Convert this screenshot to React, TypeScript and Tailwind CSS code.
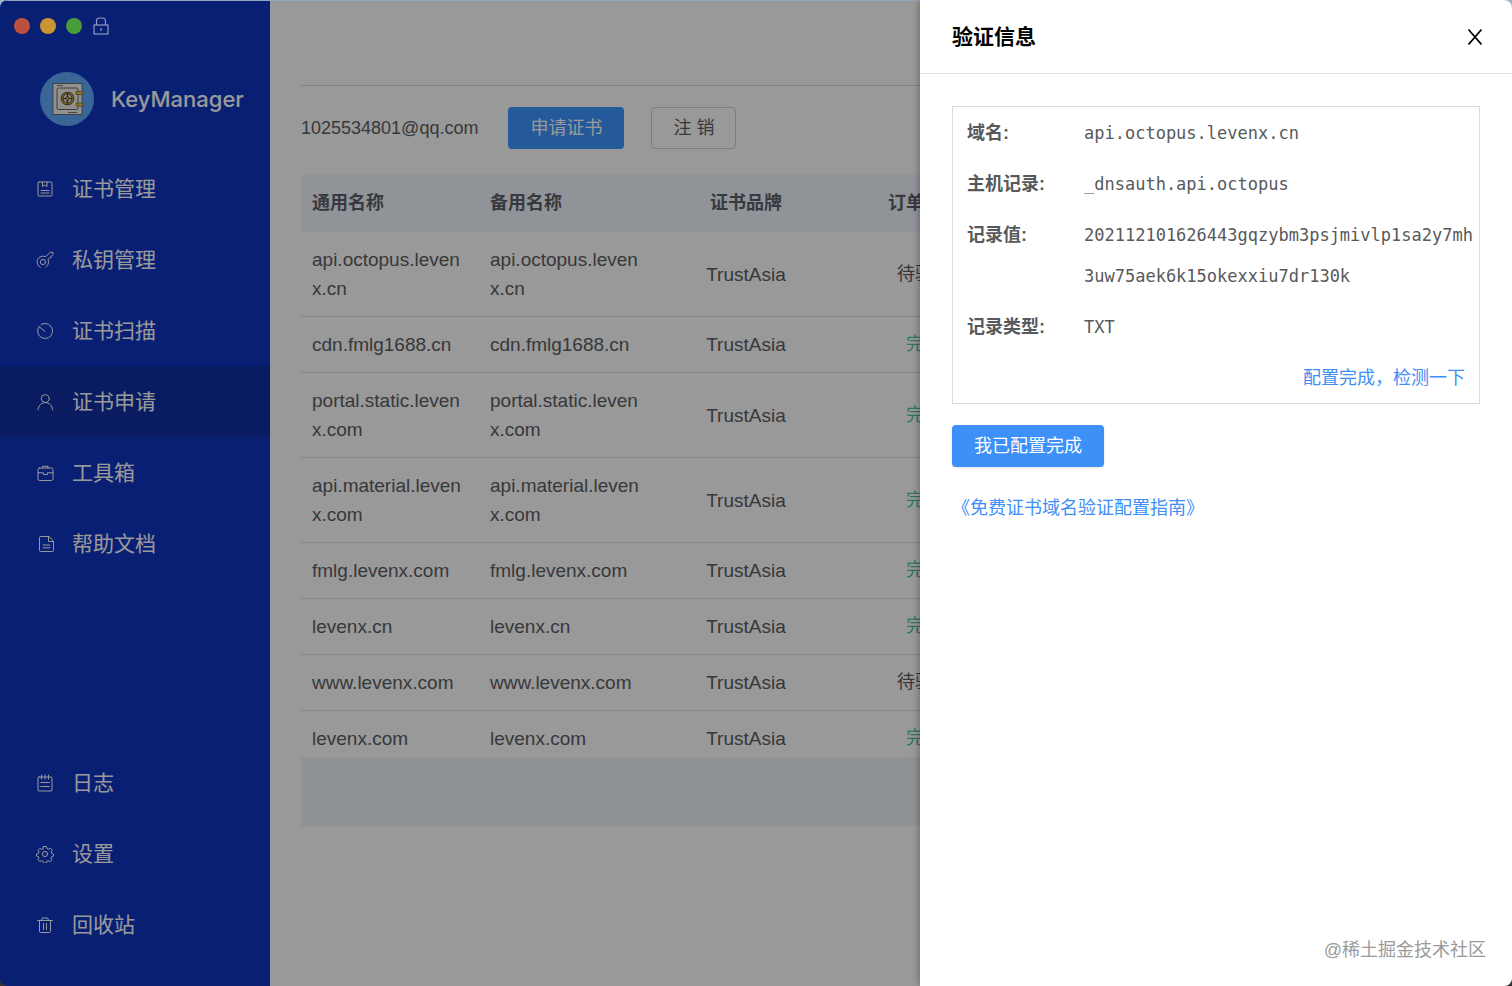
import React from "react";

const font = "font-['Liberation_Sans','Noto_Sans_CJK_SC',sans-serif]";

const icons: Record<string, React.ReactNode> = {
  book: (
    <>
      <rect x="2" y="2" width="14" height="14" rx="1" />
      <path d="M6.5 2v4.5l2.3-1.6 2.2 1.6V2M5 10.5h8M5 13h8" />
    </>
  ),
  key: (
    <>
      <circle cx="7" cy="11" r="2.6" />
      <path d="M4.2 16.2A5.8 5.8 0 0 1 9.6 5.8L14 1.3h3v2.2l-1.6 1.4-.3 1.6-1.8.4-1.2 1.6.5 2.3A5.8 5.8 0 0 1 9.8 16" />
    </>
  ),
  timer: <path d="M3 4.6A7.5 7.5 0 1 0 9 1.5c-1.4 0-2.6.4-3.7 1M3.4 4.9 9 9.4" />,
  user: (
    <>
      <circle cx="9.3" cy="5.6" r="4" />
      <path d="M2 16.8c.4-4.4 3.2-7.2 7.3-7.2s6.9 2.8 7.2 7.2" />
    </>
  ),
  briefcase: (
    <>
      <rect x="2" y="4" width="15" height="12.5" rx="1.5" />
      <path d="M6.5 4V2.3H12V4M2 8.800h5.500v1.700h4V8.800H17" />
    </>
  ),
  doc: (
    <>
      <path d="M12.500 1.500h-8a1 1 0 0 0-1 1v13a1 1 0 0 0 1 1h12a1 1 0 0 0 1-1v-9zM12.500 1.500v5h5" />
      <path d="M7 10h7M7 12.800h7" />
    </>
  ),
  log: (
    <>
      <rect x="2" y="3" width="14" height="14" rx="1" />
      <path d="M5.500 1v4M9 1v4M12.500 1v4M4.800 8.500h8.400M4.800 12.500h8.400" />
    </>
  ),
  gear: (
    <>
      <circle cx="9" cy="9" r="2.600" />
      <path d="M7.500 1.500h3l.5 2 1.500.7 1.900-1 1.900 2-1 1.800.4 1.300 1.800.8v2l-1.900.6-.6 1.400.9 1.800-1.800 1.700-1.800-.8-1.300.5-.6 1.700H7.500l-.6-1.800-1.300-.5-1.800.9-1.700-1.800.8-1.800-.5-1.300-1.900-.6v-2l1.900-.7.6-1.300-.9-1.800 1.800-1.900 1.800 1 1.300-.6z" />
    </>
  ),
  trash: (
    <path d="M1.500 4.500h15M5.500 4.500l.8-2.500h5.400l.8 2.500M3.500 4.500v11a1 1 0 0 0 1 1h9a1 1 0 0 0 1-1v-11M7.500 7.500v6M10.500 7.500v6" />
  ),
};

const topNav = [
  { icon: "book", label: "证书管理" },
  { icon: "key", label: "私钥管理" },
  { icon: "timer", label: "证书扫描" },
  { icon: "user", label: "证书申请", active: true },
  { icon: "briefcase", label: "工具箱" },
  { icon: "doc", label: "帮助文档" },
];

const bottomNav = [
  { icon: "log", label: "日志" },
  { icon: "gear", label: "设置" },
  { icon: "trash", label: "回收站" },
];

const orders = [
  { name: "api.octopus.levenx.cn", done: false },
  { name: "cdn.fmlg1688.cn", done: true },
  { name: "portal.static.levenx.com", done: true },
  { name: "api.material.levenx.com", done: true },
  { name: "fmlg.levenx.com", done: true },
  { name: "levenx.cn", done: true },
  { name: "www.levenx.com", done: false },
  { name: "levenx.com", done: true },
];

const records = [
  { label: "域名:", value: "api.octopus.levenx.cn" },
  { label: "主机记录:", value: "_dnsauth.api.octopus" },
  {
    label: "记录值:",
    value: "202112101626443gqzybm3psjmivlp1sa2y7mh3uw75aek6k15okexxiu7dr130k",
  },
  { label: "记录类型:", value: "TXT" },
];

const NavItem = ({
  icon,
  label,
  active,
}: {
  icon: string;
  label: string;
  active?: boolean;
}) => (
  <a
    href="#"
    className={`flex h-[71px] items-center gap-[18px] pl-9 text-[21px] text-white ${
      active ? "bg-[#0f2fa3]" : ""
    }`}
  >
    <svg
      viewBox="0 0 18 18"
      className="size-[18px] shrink-0"
      fill="none"
      stroke="currentColor"
      strokeWidth="1"
      strokeLinecap="round"
      strokeLinejoin="round"
    >
      {icons[icon]}
    </svg>
    {label}
  </a>
);

const SafeLogo = () => (
  <svg viewBox="0 0 54 54" className="size-[54px]">
    <circle cx="27" cy="27" r="27" fill="#5fabfb" />
    <rect x="13" y="11.500" width="29" height="31" fill="#f4f2ee" stroke="#555" strokeWidth="0.800" />
    <rect x="17" y="16" width="21" height="21.500" rx="1.500" fill="#f0eee8" stroke="#555" strokeWidth="0.900" />
    <path d="M17 13.500h6M28 40.500h9" stroke="#555" strokeWidth="0.800" />
    <circle cx="27.500" cy="26.500" r="5.500" fill="#ece8d8" stroke="#333" strokeWidth="2.600" />
    <circle cx="27.500" cy="26.500" r="5.500" fill="none" stroke="#e8b93c" strokeWidth="1.200" />
    <path d="M27.500 21.500v10M22.500 26.500h10" stroke="#333" strokeWidth="1.200" />
    <circle cx="27.500" cy="26.500" r="1.800" fill="#e8b93c" stroke="#333" strokeWidth="0.800" />
    <path d="M36 19.500h7v3h-7zM36 31h7v3h-7z" fill="#f5c02c" stroke="#555" strokeWidth="0.600" />
  </svg>
);

const Sidebar = () => (
  <aside className="flex w-[270px] shrink-0 flex-col bg-[#1035c2] pb-[26px]">
    {/* room for the window controls */}
    <div className="h-[52px]" />
    <div className="mt-5 mb-[27px] flex items-center gap-[17px] pl-10">
      <SafeLogo />
      <h1 className="font-['Inter',sans-serif] text-[22px] font-medium text-white">KeyManager</h1>
    </div>
    <nav>
      {topNav.map((item) => (
        <NavItem key={item.label} {...item} />
      ))}
    </nav>
    <nav className="mt-auto">
      {bottomNav.map((item) => (
        <NavItem key={item.label} {...item} />
      ))}
    </nav>
  </aside>
);

const Orders = () => (
  <main className="min-w-0 flex-1 bg-white px-[31px] pt-[85px] text-[#5c5e62]">
    <div className="flex items-center border-t border-[#d8dade] pt-[21px] pb-[26px]">
      <span className="text-[18px]">1025534801@qq.com</span>
      <button className="ml-[30px] h-[42px] rounded bg-[#3d96ff] px-[22px] text-[18px] text-white">
        申请证书
      </button>
      <button className="ml-[27px] h-[42px] rounded border border-[#d0d3da] px-[21px] text-[18px]">
        注 销
      </button>
    </div>
    <div className="max-h-[582px] overflow-hidden">
      <table className="w-full table-fixed text-left">
        <thead>
          <tr className="h-[57px] bg-[#f1f5fe] text-[18px] text-[#5c6068]">
            <th className="w-[178px] px-[11px] font-bold">通用名称</th>
            <th className="w-[178px] px-[11px] font-bold">备用名称</th>
            <th className="w-[178px] px-[11px] text-center font-bold">证书品牌</th>
            <th className="w-[178px] px-[11px] text-center font-bold">订单状态</th>
            <th className="px-[11px] text-center font-bold">操作</th>
          </tr>
        </thead>
        <tbody className="text-[19px] leading-[29px]">
          {orders.map(({ name, done }) => (
            <tr key={name} className="border-b border-[#dcdfe4]">
              <td className="px-[11px] py-[13px] break-all">{name}</td>
              <td className="px-[11px] py-[13px] break-all">{name}</td>
              <td className="px-[11px] text-center">TrustAsia</td>
              <td className={`px-[11px] text-center text-[18px] ${done ? "text-[#4fc59a]" : ""}`}>
                {done ? "完成" : "待验证"}
              </td>
              <td />
            </tr>
          ))}
        </tbody>
      </table>
    </div>
    <div className="h-[69px] bg-[#f1f5fa]" />
  </main>
);

const VerifyDrawer = () => (
  <section
    role="dialog"
    aria-labelledby="drawer-title"
    className="absolute inset-y-0 right-0 w-[592px] bg-white shadow-[-1px_0_7px_rgba(0,0,0,0.3)]"
  >
    <header className="flex h-[74px] items-center justify-between border-b border-[#e4e4e6] pr-7 pl-8">
      <h2 id="drawer-title" className="text-[21px] font-bold text-black">
        验证信息
      </h2>
      <button aria-label="关闭" className="text-black">
        <svg viewBox="0 0 18 18" className="size-[18px]" fill="none" stroke="currentColor" strokeWidth="1.800">
          <path d="M2.500 1.500l13 15M15.500 1.500l-13 15" />
        </svg>
      </button>
    </header>
    <div className="px-8 pt-8">
      <div className="border border-[#dcdcdf] pt-[6px] pb-1 pl-[14px] text-[18px] leading-[41px] text-[#58595b]">
        <dl className="flex flex-col gap-[10px]">
          {records.map(({ label, value }) => (
            <div key={label} className="flex">
              <dt className="w-[117px] shrink-0 font-bold">{label}</dt>
              <dd className="min-w-0 flex-1 pr-1 font-['DejaVu_Sans_Mono',monospace] text-[17px] break-all">
                {value}
              </dd>
            </div>
          ))}
        </dl>
        <div className="mt-[10px] pr-[14px] text-right">
          <a href="#" className="text-[#3d8ef5]">
            配置完成，检测一下
          </a>
        </div>
      </div>
      <button className="mt-[21px] h-[42px] rounded bg-[#3d90f8] px-[22px] text-[18px] text-white shadow-sm">
        我已配置完成
      </button>
      <p className="mt-[21px] text-[18px] leading-[41px]">
        <a href="#" className="text-[#3d8ef5]">
          《免费证书域名验证配置指南》
        </a>
      </p>
    </div>
    <span className="absolute right-[26px] bottom-[22px] text-[18px] text-[#9a9a9a]">
      @稀土掘金技术社区
    </span>
  </section>
);

const WindowControls = () => (
  <div className="absolute top-[17px] left-[14px] flex items-center gap-[10px]">
    <span className="size-4 rounded-full bg-[#bd503c]" />
    <span className="size-4 rounded-full bg-[#c99432]" />
    <span className="size-4 rounded-full bg-[#489c3a]" />
    <svg viewBox="0 0 18 18" className="size-[18px]" fill="none" stroke="#8d99bb" strokeWidth="1.200">
      <rect x="2" y="8" width="14" height="9" />
      <path d="M4.500 8V4q0-3 3-3h3q3 0 3 3v4M9 11v3" />
    </svg>
  </div>
);

export default function App() {
  return (
    <div className={`bg-linear-to-b from-[#9db6c8] to-[#333] ${font}`}>
      <div className="relative flex min-h-screen overflow-hidden rounded-lg">
        <Sidebar />
        <Orders />
        <div className="absolute inset-0 border-t border-[#93a6bd] bg-black/40" />
        <WindowControls />
        <VerifyDrawer />
      </div>
    </div>
  );
}
